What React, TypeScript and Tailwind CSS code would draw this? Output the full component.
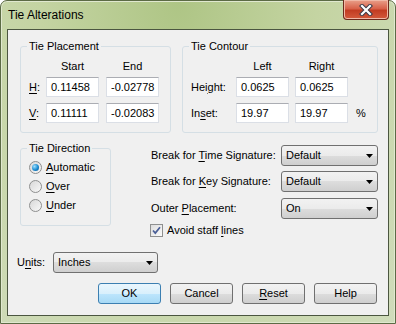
import React from 'react';

const U = ({ c }: { c: string }) => <span className="underline underline-offset-[2px]">{c}</span>;

const Group = ({ title, className, children }: { title: string; className: string; children: React.ReactNode }) => (
    <div className={`relative rounded-[3px] border border-[#d5dfe5] ${className}`}>
        <span className="absolute left-[6px] top-[-7px] bg-[#f0f0f0] px-[2px] leading-[13px]">{title}</span>
        {children}
    </div>
);

const Field = ({ value }: { value: string }) => (
    <div className="h-[20px] w-[53px] border border-[#dbdfe6] border-t-[#abadb3] bg-white pl-[4px] leading-[18px]">{value}</div>
);

const Arrow = () => (
    <svg width="7" height="4" viewBox="0 0 7 4"><path d="M0 0h7L3.5 4z" fill="#000" /></svg>
);

const Select = ({ value, className }: { value: string; className: string }) => (
    <div className={`flex h-[21px] items-center justify-between rounded-[3px] border border-[#707070] bg-[linear-gradient(#f2f2f2,#ebebeb_50%,#dddddd_50%,#cfcfcf)] pl-[4px] pr-[4px] ${className}`}>
        <span>{value}</span>
        <Arrow />
    </div>
);

const Radio = ({ checked, children }: { checked?: boolean; children: React.ReactNode }) => (
    <div className="flex h-[13px] items-center gap-[4px]">
        <div className="flex h-[13px] w-[13px] items-center justify-center rounded-full border border-[#8e8f8f] bg-[linear-gradient(135deg,#d8d8d8,#f8f8f8)]">
            {checked && <div className="h-[7px] w-[7px] rounded-full bg-[radial-gradient(circle_at_35%_35%,#9fe0ff,#1a8bd0_55%,#0b4f8c)]" />}
        </div>
        <span>{children}</span>
    </div>
);

const Button = ({ children, primary }: { children: React.ReactNode; primary?: boolean }) => (
    <div className={`flex h-[21px] w-[63px] items-center justify-center rounded-[3px] border ${primary ? 'border-[#3c7fb1] bg-[linear-gradient(#eaf6fd,#d9f0fc_50%,#bee6fd_50%,#a7d9f5)]' : 'border-[#707070] bg-[linear-gradient(#f2f2f2,#ebebeb_50%,#dddddd_50%,#cfcfcf)]'}`}>
        {children}
    </div>
);

export default function App() {
    return (
        <div className="h-[324px] w-[396px] font-['Liberation_Sans',sans-serif] text-[11px] text-black">
            <div className="flex h-[324px] w-[396px] flex-col rounded-t-[7px] border border-[#5c6b45] bg-[radial-gradient(ellipse_at_45%_0%,#aec585_0%,#c4d4a2_45%,#d0dcbb_100%)] px-[6px] pb-[7px] shadow-[inset_0_0_0_1px_#e0e8cf]">
                {/* title bar */}
                <div className="flex h-[28px] items-start justify-between">
                    <span className="ml-[1px] mt-[7px] text-[12px] leading-[14px]">Tie Alterations</span>
                    <div className="mt-[-1px] flex h-[20px] w-[46px] items-center justify-center rounded-b-[4px] border border-t-0 border-[#6b2a1c] bg-[linear-gradient(#e9a08a,#d8624a_45%,#c23c22_55%,#d45a3c)] shadow-[inset_0_0_0_1px_#f0b8a6]">
                        <svg width="14" height="12" viewBox="0 0 14 12">
                            <path d="M3 2l8 8M11 2l-8 8" stroke="#3b3b48" strokeWidth="4.2" strokeLinecap="square" />
                            <path d="M3 2l8 8M11 2l-8 8" stroke="#fff" strokeWidth="2.2" strokeLinecap="square" />
                        </svg>
                    </div>
                </div>
                {/* client */}
                <div className="flex h-[287px] flex-col border border-[#4b5640] bg-[#f0f0f0] pl-[12px] pt-[16px]">
                    <div className="flex gap-[11px]">
                        <Group title="Tie Placement" className="h-[87px] w-[151px] pl-[8px] pt-[13px]">
                            <div className="flex h-[13px] leading-[13px]">
                                <span className="w-[17px]" />
                                <span className="w-[53px] text-center">Start</span>
                                <span className="ml-[7px] w-[53px] text-center">End</span>
                            </div>
                            <div className="mt-[4px] flex items-center">
                                <span className="w-[17px]"><U c="H" />:</span>
                                <Field value="0.11458" />
                                <div className="ml-[7px]"><Field value="-0.02778" /></div>
                            </div>
                            <div className="mt-[6px] flex items-center">
                                <span className="w-[17px]"><U c="V" />:</span>
                                <Field value="0.11111" />
                                <div className="ml-[7px]"><Field value="-0.02083" /></div>
                            </div>
                        </Group>
                        <Group title="Tie Contour" className="h-[87px] w-[196px] pl-[8px] pt-[13px]">
                            <div className="flex h-[13px] leading-[13px]">
                                <span className="w-[45px]" />
                                <span className="w-[53px] text-center">Left</span>
                                <span className="ml-[6px] w-[53px] text-center">Right</span>
                            </div>
                            <div className="mt-[4px] flex items-center">
                                <span className="w-[45px]">Hei<U c="g" />ht:</span>
                                <Field value="0.0625" />
                                <div className="ml-[6px]"><Field value="0.0625" /></div>
                            </div>
                            <div className="mt-[6px] flex items-center">
                                <span className="w-[45px]">In<U c="s" />et:</span>
                                <Field value="19.97" />
                                <div className="ml-[6px]"><Field value="19.97" /></div>
                                <span className="ml-[8px]">%</span>
                            </div>
                        </Group>
                    </div>

                    <div className="mt-[15px] flex items-start">
                        <Group title="Tie Direction" className="flex h-[78px] w-[91px] flex-col gap-[6px] pl-[8px] pt-[12px]">
                            <Radio checked><U c="A" />utomatic</Radio>
                            <Radio><U c="O" />ver</Radio>
                            <Radio><U c="U" />nder</Radio>
                        </Group>
                        <div className="ml-[40px] mt-[-3px] flex flex-col">
                            <div className="flex items-center">
                                <span className="w-[130px]">Break for <U c="T" />ime Signature:</span>
                                <Select value="Default" className="w-[97px]" />
                            </div>
                            <div className="mt-[5px] flex items-center">
                                <span className="w-[130px]">Break for <U c="K" />ey Signature:</span>
                                <Select value="Default" className="w-[97px]" />
                            </div>
                            <div className="mt-[6px] flex items-center">
                                <span className="w-[130px]">Outer <U c="P" />lacement:</span>
                                <Select value="On" className="w-[97px]" />
                            </div>
                            <div className="ml-[-1px] mt-[5px] flex h-[13px] items-center gap-[4px]">
                                <div className="flex h-[13px] w-[13px] items-center justify-center border border-[#8e8f8f] bg-[linear-gradient(135deg,#dcdcdc,#fbfbfb)]">
                                    <svg width="9" height="9" viewBox="0 0 9 9"><path d="M1 4.5l2.3 2.6L8 1.2" stroke="#4a5f97" strokeWidth="1.7" fill="none" /></svg>
                                </div>
                                <span>Avoid staff <U c="l" />ines</span>
                            </div>
                        </div>
                    </div>

                    <div className="ml-[-3px] mt-[15px] flex items-center">
                        <span className="w-[36px]">U<U c="n" />its:</span>
                        <Select value="Inches" className="w-[105px]" />
                    </div>

                    <div className="mt-[10px] flex justify-end gap-[9px] pr-[11px]">
                        <Button primary>OK</Button>
                        <Button>Cancel</Button>
                        <Button><U c="R" />eset</Button>
                        <Button>Help</Button>
                    </div>
                </div>
            </div>
        </div>
    );
}
